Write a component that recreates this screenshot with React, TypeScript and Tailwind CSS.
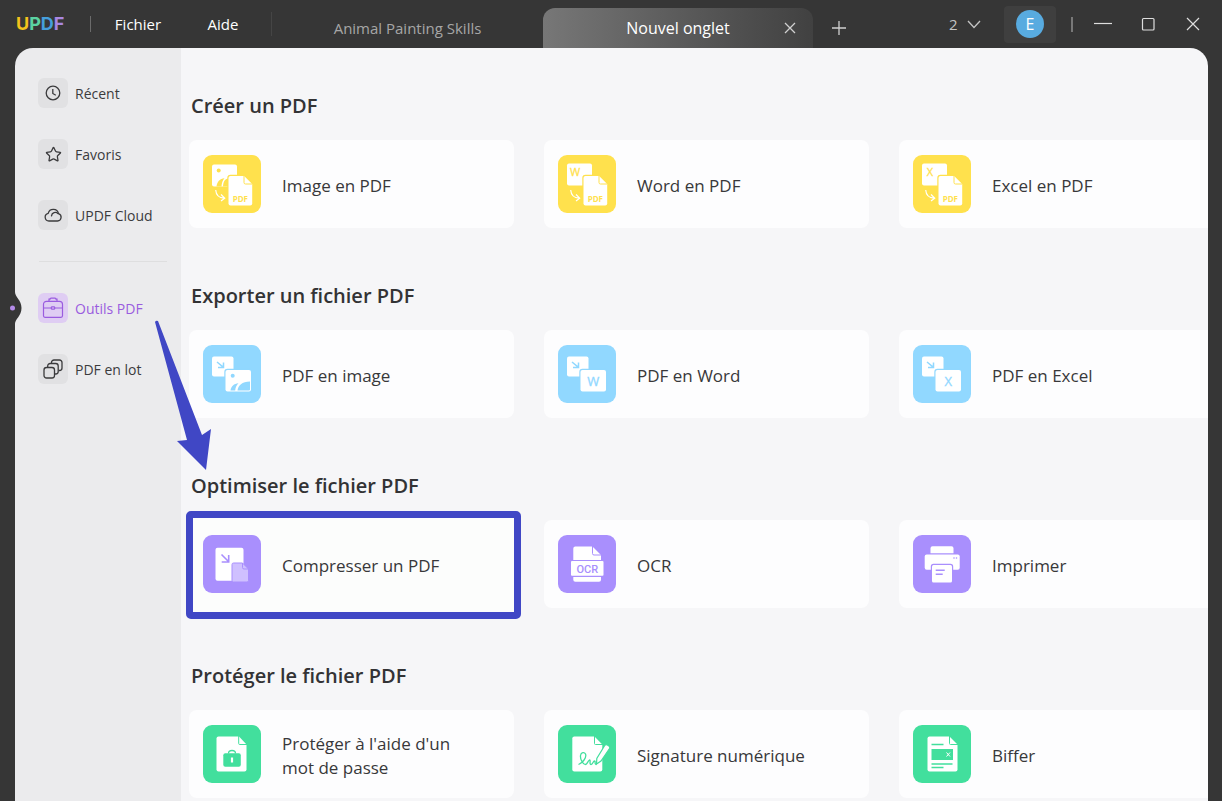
import React from 'react';
import { Star } from 'lucide-react';

type IconName =
  | 'imageToPdf'
  | 'wordToPdf'
  | 'excelToPdf'
  | 'pdfToImage'
  | 'pdfToWord'
  | 'pdfToExcel'
  | 'compress'
  | 'ocr'
  | 'print'
  | 'protect'
  | 'sign'
  | 'redact';

interface Tool {
  label: string;
  icon: IconName;
  highlighted?: boolean;
}

interface Section {
  title: string;
  color: string;
  tools: Tool[];
}

const sections: Section[] = [
  {
    title: 'Créer un PDF',
    color: '#ffe14d',
    tools: [
      { label: 'Image en PDF', icon: 'imageToPdf' },
      { label: 'Word en PDF', icon: 'wordToPdf' },
      { label: 'Excel en PDF', icon: 'excelToPdf' },
    ],
  },
  {
    title: 'Exporter un fichier PDF',
    color: '#91d8ff',
    tools: [
      { label: 'PDF en image', icon: 'pdfToImage' },
      { label: 'PDF en Word', icon: 'pdfToWord' },
      { label: 'PDF en Excel', icon: 'pdfToExcel' },
    ],
  },
  {
    title: 'Optimiser le fichier PDF',
    color: '#a98ffd',
    tools: [
      { label: 'Compresser un PDF', icon: 'compress', highlighted: true },
      { label: 'OCR', icon: 'ocr' },
      { label: 'Imprimer', icon: 'print' },
    ],
  },
  {
    title: 'Protéger le fichier PDF',
    color: '#42df9d',
    tools: [
      { label: "Protéger à l'aide d'un mot de passe", icon: 'protect' },
      { label: 'Signature numérique', icon: 'sign' },
      { label: 'Biffer', icon: 'redact' },
    ],
  },
];

const SourceToPdf = ({ color, letter }: { color: string; letter?: string }) => (
  <>
    <rect x="9" y={letter ? 8.5 : 9.5} width="25" height="22" rx="2" fill="#fff" />
    {letter ? (
      <text x="17" y="20.5" fontSize="11" textAnchor="middle" fill={color} stroke={color} strokeWidth=".3">
        {letter}
      </text>
    ) : (
      <>
        <circle cx="15.7" cy="15.5" r="2" fill={color} />
        <path d="M13.5 31.5c.3-4.500 3.500-8 8-8.300-2 2-2.800 5-3 8.300zM20 31.500c.3-4.500 1.500-7.500 5.500-8.300v8.300z" fill={color} />
      </>
    )}
    <path
      d="M27.500 21h13.700l8 8v19.500a2 2 0 0 1-2 2H27.500a2 2 0 0 1-2-2V23a2 2 0 0 1 2-2z"
      fill="#fff"
      stroke={color}
      strokeWidth="2.400"
      paintOrder="stroke"
    />
    <path d="M41 21v6.500a1.500 1.500 0 0 0 1.500 1.500H49" fill="none" stroke={color} />
    <text x="37.300" y="46.500" fontSize="8" fontWeight="700" textAnchor="middle" fill={color}>
      PDF
    </text>
    <path d="M12.700 35c.4 5 3.500 8 8.500 8.200M18 39.500l3.700 3.700-3.700 2.800" fill="none" stroke="#fff" strokeWidth="1.200" />
  </>
);

const PdfToTarget = ({ color, letter }: { color: string; letter?: string }) => (
  <>
    <rect x="9" y="11.500" width="21.500" height="20" rx="2" fill="#fff" />
    <path d="M14 17l6.500 5.300M20.500 17.500v5h-5.500" fill="none" stroke={color} strokeWidth="1.500" />
    <rect x="22.500" y="25" width="25.500" height="21.500" rx="2" fill="#fff" stroke={color} strokeWidth="2.400" paintOrder="stroke" />
    {letter ? (
      <text x="35.200" y="40.500" fontSize="13" textAnchor="middle" fill={color} stroke={color} strokeWidth=".3">
        {letter}
      </text>
    ) : (
      <>
        <circle cx="29.700" cy="30.700" r="2" fill={color} />
        <path d="M27.500 45.500c.5-4 3.500-7 8-7.200-2 2-3 4.200-3.300 7.200zM34.500 45.500c.6-5 4.500-9 12.500-9v8a1 1 0 0 1-1 1z" fill={color} />
      </>
    )}
  </>
);

const ToolIcon = ({ name, color }: { name: IconName; color: string }) => (
  <svg viewBox="0 0 58 58" className="size-[58px] shrink-0" fontFamily="'Open Sans', sans-serif" aria-hidden="true">
    <rect width="58" height="58" rx="9" fill={color} />
    {name === 'imageToPdf' && <SourceToPdf color={color} />}
    {name === 'wordToPdf' && <SourceToPdf color={color} letter="W" />}
    {name === 'excelToPdf' && <SourceToPdf color={color} letter="X" />}
    {name === 'pdfToImage' && <PdfToTarget color={color} />}
    {name === 'pdfToWord' && <PdfToTarget color={color} letter="W" />}
    {name === 'pdfToExcel' && <PdfToTarget color={color} letter="X" />}
    {name === 'compress' && (
      <>
        <rect x="12.500" y="12.700" width="28" height="33" rx="2" fill="#fff" />
        <path d="M18.500 19.500l7 7M25.700 20v7h-7" fill="none" stroke={color} strokeWidth="1.600" />
        <path
          d="M30.500 28h9l6 6v11.500a1.500 1.500 0 0 1-1.500 1.500H30.500a1.500 1.500 0 0 1-1.500-1.500v-16a1.500 1.500 0 0 1 1.500-1.500z"
          fill="#cfc0ff"
          stroke={color}
        />
        <path d="M39.500 28v4.500a1.500 1.500 0 0 0 1.500 1.500h4.500" fill="none" stroke={color} />
      </>
    )}
    {name === 'ocr' && (
      <>
        <path d="M17.300 11.500H34.500l8.500 8.500v5H15.300v-11.500a2 2 0 0 1 2-2z" fill="#fff" />
        <path d="M34.500 11v7.500a1.500 1.500 0 0 0 1.500 1.500h7.500" fill="none" stroke={color} />
        <rect x="13" y="26" width="32.500" height="14.700" rx="1" fill="#fff" />
        <path d="M15.300 42H43v2.700a2 2 0 0 1-2 2H17.300a2 2 0 0 1-2-2z" fill="#fff" />
        <text x="29.300" y="37.500" fontSize="11" fontWeight="500" fontFamily="Roboto, sans-serif" textAnchor="middle" fill={color}>
          OCR
        </text>
      </>
    )}
    {name === 'print' && (
      <>
        <path d="M19.500 11.300h19a2 2 0 0 1 2 2v5h-23v-5a2 2 0 0 1 2-2z" fill="#fff" />
        <rect x="11.700" y="19.600" width="35" height="15.200" rx="2" fill="#fff" />
        <circle cx="41" cy="23" r=".8" fill={color} />
        <circle cx="43.500" cy="23" r=".8" fill={color} />
        <rect x="19" y="30" width="20" height="17.500" rx="1.500" fill="#fff" stroke={color} strokeWidth="2.400" paintOrder="stroke" />
        <path d="M22.700 35.300h9M22.700 39.300h7" stroke={color} strokeWidth="1.400" />
      </>
    )}
    {name === 'protect' && (
      <>
        <path d="M15.500 11.500H36l7.500 8v25a2 2 0 0 1-2 2h-26a2 2 0 0 1-2-2v-31a2 2 0 0 1 2-2z" fill="#fff" />
        <path d="M35.700 11v7.500a1 1 0 0 0 1 1H44" fill="none" stroke={color} />
        <rect x="20.300" y="28.300" width="17.500" height="13.400" rx="2" fill={color} />
        <path d="M25.500 28.500c0-4 7-4 7 0" fill="none" stroke={color} strokeWidth="1.300" />
        <path d="M29 32.500v5" stroke="#fff" strokeWidth="2.200" />
      </>
    )}
    {name === 'sign' && (
      <>
        <path d="M16.300 11.500H36.500l7.800 8v25a2 2 0 0 1-2 2h-26a2 2 0 0 1-2-2v-31a2 2 0 0 1 2-2z" fill="#fff" />
        <path d="M36.500 11v7.500a1 1 0 0 0 1 1H45" fill="none" stroke={color} />
        <path
          d="M20.500 39.500c4-1.500 8.500-7 7-10.500-1-2-4.500-2-5 1.500-.4 4 2.500 9 5 9 2 0 2-3.500 4-4.500 1.500 0-.5 4.500 1.500 4.500s2-3.500 3.500-3.500-.5 3.500 2 3.500"
          fill="none"
          stroke={color}
          strokeWidth="1.300"
        />
        <path d="M46.700 20.500a2 2 0 0 1 2.700-.6l1.500 1a2 2 0 0 1 .6 2.600L43 36l-4.500 3 .3-5.500z" fill="#fff" stroke={color} strokeWidth="1.200" />
      </>
    )}
    {name === 'redact' && (
      <>
        <path d="M16.500 11.500H36.500l8 8v25a2 2 0 0 1-2 2h-26a2 2 0 0 1-2-2v-31a2 2 0 0 1 2-2z" fill="#fff" />
        <path d="M36.500 11v7.500a1 1 0 0 0 1 1H45" fill="none" stroke={color} />
        <path d="M18.500 19.500h12M18.500 39h21M18.500 42.500h12" stroke={color} strokeWidth="1.500" />
        <rect x="18.500" y="24" width="21.500" height="11" fill={color} />
        <path d="M33.500 27.500l3.500 4M37 27.500l-3.500 4" stroke="#fff" />
      </>
    )}
  </svg>
);

const ClockIcon = () => (
  <svg viewBox="0 0 16 16" className="size-4" fill="none" stroke="currentColor" strokeWidth="1.300" aria-hidden="true">
    <circle cx="8" cy="8" r="6.800" />
    <path d="M7.800 4v4.500l3 1.800" />
  </svg>
);

const CloudIcon = () => (
  <svg viewBox="0 0 20 20" className="size-5" fill="none" stroke="currentColor" strokeWidth="1.300" strokeLinecap="round" aria-hidden="true">
    <path d="M6 16h8.500a3.800 3.800 0 0 0 1-7.400A5.300 5.300 0 0 0 5.200 8.300 3.900 3.900 0 0 0 6 16z" />
    <path d="M8.500 10.800a3.800 3.800 0 0 1 6.500-2.200" />
  </svg>
);

const ToolboxIcon = () => (
  <svg viewBox="0 0 22 22" className="size-[22px]" fill="none" stroke="currentColor" strokeWidth="1.200" aria-hidden="true">
    <path d="M7 4V2.200h1a1 1 0 0 1 1-1h4a1 1 0 0 1 1 1h1V4" />
    <path d="M4.500 4.300h13a3 3 0 0 1 3 3v11.500a1.500 1.500 0 0 1-1.500 1.500H3a1.500 1.500 0 0 1-1.500-1.500V7.300a3 3 0 0 1 3-3z" />
    <path d="M1.500 11h7.800M12.700 11h7.800" />
    <rect x="9.300" y="9.800" width="3.400" height="2.400" rx=".8" />
  </svg>
);

const BatchIcon = () => (
  <svg viewBox="0 0 20 20" className="size-5" fill="none" stroke="currentColor" strokeWidth="1.300" aria-hidden="true">
    <rect x="1" y="8.500" width="10.500" height="10.500" rx="2.500" />
    <path d="M4.700 8V7a2.500 2.500 0 0 1 2.500-2.500h5.500A2.500 2.500 0 0 1 15.200 7v5.500a2.500 2.500 0 0 1-2.500 2.500h-.8" />
    <path d="M8.500 4V3.500A2.500 2.500 0 0 1 11 1h5.500A2.500 2.500 0 0 1 19 3.500V9a2.500 2.500 0 0 1-2.500 2.500h-.8" />
  </svg>
);

interface NavItemProps {
  label: string;
  icon: React.ReactNode;
  active?: boolean;
}

const NavItem: React.FC<NavItemProps> = ({ label, icon, active = false }) => (
  <a
    href="#"
    aria-current={active ? 'page' : undefined}
    className={`relative flex h-[30px] items-center gap-[7px] pl-[23px] text-[14px] ${
      active ? 'text-[#9a5cdf]' : 'text-[#3b3b3d]'
    }`}
  >
    {active && (
      <svg viewBox="0 0 12 32" className="absolute -top-px -left-[5px] h-8 w-3" aria-hidden="true">
        <path d="M0 0h5c0 5 6.500 8 6.500 16S5 27 5 32H0z" fill="#363636" />
        <circle cx="2.500" cy="16" r="2.500" fill="#b48be8" />
      </svg>
    )}
    <span
      className={`flex size-[30px] items-center justify-center rounded-md ${active ? 'bg-[#dfcdf3]' : 'bg-[#e1e1e3]'}`}
    >
      {icon}
    </span>
    <span className="pt-px">{label}</span>
  </a>
);

const TitleBar = () => (
  <header className="flex h-12 shrink-0 items-center bg-[#363636] text-white">
    <div className="ml-4 w-[74px] font-['Inter'] text-[18px] leading-none font-bold">
      <span className="text-[#f3c31c]">U</span>
      <span className="text-[#5bd3a2]">P</span>
      <span className="text-[#459fdc]">D</span>
      <span className="text-[#a987e2]">F</span>
    </div>
    <div className="h-4 w-px bg-[#6b6b6b]" />
    <nav className="flex items-center">
      <button type="button" className="w-[94px] text-[15px]">Fichier</button>
      <button type="button" className="w-[76px] text-[15px]">Aide</button>
    </nav>
    <div className="ml-[10px] h-6 w-px bg-[#454545]" />
    <button type="button" className="mt-2 w-[271px] text-[15px] text-[#a6a6a6]">
      Animal Painting Skills
    </button>
    <div className="mt-2 flex h-10 w-[270px] items-center justify-end self-end rounded-t-xl bg-gradient-to-r from-[#777777] to-[#414141] pr-4">
      <button type="button" className="flex-1 pl-[30px] text-[16px]">Nouvel onglet</button>
      <button type="button" aria-label="Fermer l'onglet">
        <svg viewBox="0 0 14 14" className="size-[14px]" stroke="#d0d0d0" strokeWidth="1.300" aria-hidden="true">
          <path d="M2 2l10 10M12 2L2 12" />
        </svg>
      </button>
    </div>
    <button type="button" aria-label="Ajouter un onglet" className="mt-2 ml-[18px]">
      <svg viewBox="0 0 16 16" className="size-4" stroke="#d0d0d0" strokeWidth="1.300" aria-hidden="true">
        <path d="M8 1v14M1 8h14" />
      </svg>
    </button>

    <div className="ml-auto flex items-center">
      <div className="relative mr-[23px] flex items-center">
        <select aria-label="Fenêtres ouvertes" className="w-8 appearance-none bg-transparent text-[15px] text-[#c4c4c4]">
          <option>2</option>
        </select>
        <svg viewBox="0 0 14 10" className="pointer-events-none absolute right-0 h-[10px] w-[14px]" fill="none" stroke="#c4c4c4" strokeWidth="1.300" aria-hidden="true">
          <path d="M1 2l6 6.500L13 2" />
        </svg>
      </div>
      <button type="button" aria-label="Compte" className="flex h-[37px] w-[52px] items-center justify-center rounded bg-[#3f3f3f]">
        <span className="flex size-7 items-center justify-center rounded-full bg-[#58abe0] text-[16px]">E</span>
      </button>
      <div className="ml-[15px] h-[15px] w-[2px] bg-[#787878]" />
      <div className="ml-[21px] flex items-center gap-[27px] pr-5">
        <button type="button" aria-label="Réduire">
          <svg viewBox="0 0 18 18" className="size-[18px]" stroke="#dedede" strokeWidth="1.200" aria-hidden="true">
            <path d="M0 8.500h18" />
          </svg>
        </button>
        <button type="button" aria-label="Agrandir">
          <svg viewBox="0 0 18 18" className="size-[18px]" fill="none" stroke="#dedede" strokeWidth="1.200" aria-hidden="true">
            <rect x="3.500" y="3.500" width="11.500" height="11.500" rx="1" />
          </svg>
        </button>
        <button type="button" aria-label="Fermer">
          <svg viewBox="0 0 18 18" className="size-[18px]" stroke="#dedede" strokeWidth="1.200" aria-hidden="true">
            <path d="M3 3l12 12M15 3L3 15" />
          </svg>
        </button>
      </div>
    </div>
  </header>
);

const ToolCard = ({ tool, color }: { tool: Tool; color: string }) => (
  <li className="relative">
    {tool.highlighted && (
      <span className="absolute -top-[9px] -right-[7px] -bottom-[11px] -left-[3px] rounded-[5px] border-[7px] border-[#4047c5] bg-[#fcfdfc]" />
    )}
    <button
      type="button"
      className={`relative flex h-[88px] w-full items-center gap-[21px] rounded-lg pr-14 pl-[14px] text-left text-[17px] leading-6 text-[#38383a] ${
        tool.highlighted ? '' : 'bg-[#fdfdfe]'
      }`}
    >
      <ToolIcon name={tool.icon} color={color} />
      <span className="pt-1">{tool.label}</span>
    </button>
  </li>
);

export default function App() {
  return (
    <div className="flex h-screen flex-col overflow-hidden bg-[#363636] font-['Open_Sans',sans-serif]">
      <TitleBar />
      <div className="relative mr-[14px] ml-[15px] flex min-h-0 flex-1">
        <aside className="w-[166px] shrink-0 rounded-tl-[18px] bg-[#ebebed] pt-[30px]">
          <nav className="flex flex-col gap-[31px]">
            <NavItem label="Récent" icon={<ClockIcon />} />
            <NavItem label="Favoris" icon={<Star size={17} strokeWidth={1.8} />} />
            <NavItem label="UPDF Cloud" icon={<CloudIcon />} />
            <hr className="mr-[14px] ml-6 border-[#dededf]" />
            <NavItem label="Outils PDF" icon={<ToolboxIcon />} active />
            <NavItem label="PDF en lot" icon={<BatchIcon />} />
          </nav>
        </aside>

        <main className="min-w-0 flex-1 overflow-hidden rounded-tr-[18px] bg-[#f6f6f8] pt-11 pl-2">
          <div className="flex flex-col gap-[54px]">
            {sections.map((section) => (
              <section key={section.title}>
                <h2 className="mb-5 pl-[2px] text-[20px] leading-7 font-semibold text-[#333335]">{section.title}</h2>
                <ul className="grid grid-cols-[repeat(3,325px)] gap-[30px]">
                  {section.tools.map((tool) => (
                    <ToolCard key={tool.label} tool={tool} color={section.color} />
                  ))}
                </ul>
              </section>
            ))}
          </div>
        </main>

        {/* pointer from the sidebar entry to the highlighted tool */}
        <svg viewBox="0 0 56 150" className="pointer-events-none absolute top-[272px] left-[140px] h-[150px] w-14" aria-hidden="true">
          <path d="M0 2q1-2 3-1L47 115l9-6-5 41-29-29 10-1z" fill="#4047c5" />
        </svg>
      </div>
    </div>
  );
}
